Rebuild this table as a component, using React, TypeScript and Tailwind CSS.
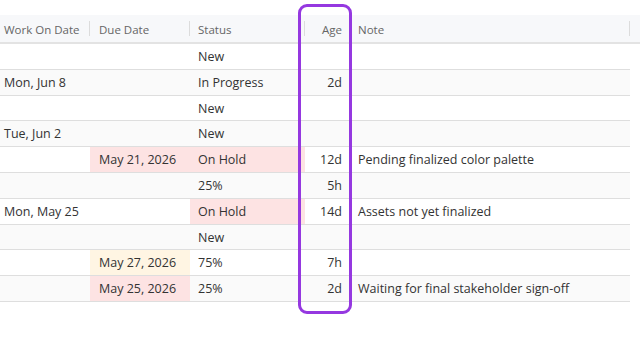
const ROWS = [
  { work: '', due: '', dueTone: '', status: 'New', statusTone: '', age: '', note: '' },
  { work: 'Mon, Jun 8', due: '', dueTone: '', status: 'In Progress', statusTone: '', age: '2d', note: '' },
  { work: '', due: '', dueTone: '', status: 'New', statusTone: '', age: '', note: '' },
  { work: 'Tue, Jun 2', due: '', dueTone: '', status: 'New', statusTone: '', age: '', note: '' },
  { work: '', due: 'May 21, 2026', dueTone: 'red', status: 'On Hold', statusTone: 'red', age: '12d', note: 'Pending finalized color palette' },
  { work: '', due: '', dueTone: '', status: '25%', statusTone: '', age: '5h', note: '' },
  { work: 'Mon, May 25', due: '', dueTone: '', status: 'On Hold', statusTone: 'red', age: '14d', note: 'Assets not yet finalized' },
  { work: '', due: '', dueTone: '', status: 'New', statusTone: '', age: '', note: '' },
  { work: '', due: 'May 27, 2026', dueTone: 'yellow', status: '75%', statusTone: '', age: '7h', note: '' },
  { work: '', due: 'May 25, 2026', dueTone: 'red', status: '25%', statusTone: '', age: '2d', note: 'Waiting for final stakeholder sign-off' },
];

const tone = (t: string) =>
  t === 'red' ? 'bg-[#fde3e3]' : t === 'yellow' ? 'bg-[#fff5e3]' : '';

export default function App() {
  return (
    <div className="relative w-[640px] h-[360px] bg-white pt-[15px] text-[12.5px] text-[#333]" style={{ fontFamily: '"Open Sans", "Noto Sans", sans-serif' }}>
      {/* Header */}
      <div className="flex h-[29px] bg-[#f7f8fa] border-b-2 border-[#e3e3e3] text-[#666] text-[11.5px]">
        <div className="w-[90px] flex items-center pl-[4px] pt-[2px] border-r border-[#dcdcdc] my-[6px]">Work On Date</div>
        <div className="w-[100px] flex items-center pl-[9px] pt-[2px] border-r border-[#dcdcdc] my-[6px]">Due Date</div>
        <div className="w-[115px] flex items-center pl-[8px] pt-[2px] border-r border-[#dcdcdc] my-[6px]">Status</div>
        <div className="w-[45px] flex items-center justify-end pr-[8px] pt-[2px]">Age</div>
        <div className="w-[280px] flex items-center pl-[8px] pt-[2px] border-r border-[#dcdcdc] my-[6px]">Note</div>
      </div>

      {/* Body */}
      <div className="w-[630px]">
        {ROWS.map((r, i) => (
          <div
            key={i}
            className={`flex h-[25.8px] border-b border-[#dedede] pt-[2px] ${i % 2 === 1 ? 'bg-[#fafafa]' : 'bg-white'}`}
          >
            <div className="w-[90px] flex items-center pl-[4px]">{r.work}</div>
            <div className={`w-[100px] flex items-center pl-[9px] -mt-[2px] pt-[2px] ${tone(r.dueTone)}`}>{r.due}</div>
            <div className={`w-[115px] flex items-center pl-[8px] -mt-[2px] pt-[2px] ${tone(r.statusTone)}`}>{r.status}</div>
            <div className="w-[45px] flex items-center justify-end pr-[8px]">{r.age}</div>
            <div className="flex-1 flex items-center pl-[8px]">{r.note}</div>
          </div>
        ))}
      </div>

      {/* Highlight around Age column */}
      <div className="absolute left-[298px] top-[4px] w-[54px] h-[310px] rounded-[9px] border-[3px] border-[#9538e0] pointer-events-none" />
    </div>
  );
}
